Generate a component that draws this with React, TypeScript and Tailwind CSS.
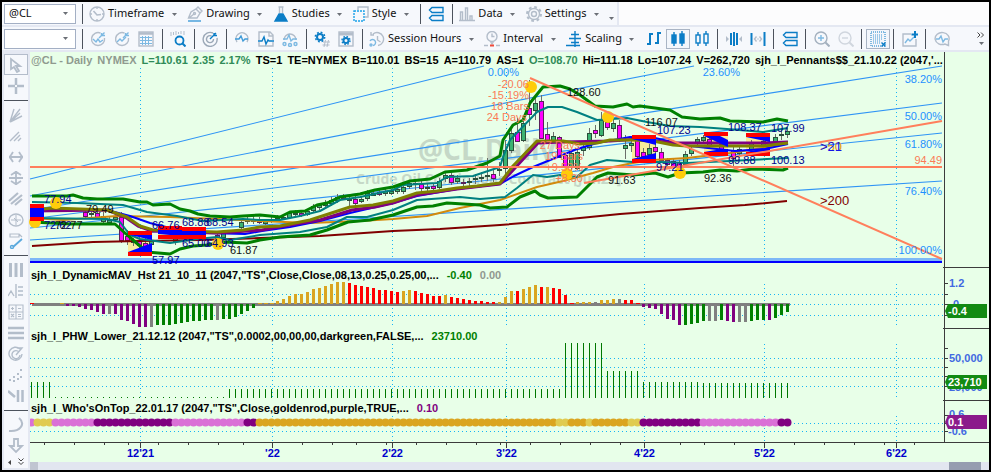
// src/App.tsx
import type { ReactNode } from 'react';
import { clsx } from 'clsx';

const GRID_X = [140.5, 272.5, 392.5, 506.5, 644.5, 764.5, 896.5];
const MONTHS = ["12'21", "'22", "2'22", "3'22", "4'22", "5'22", "6'22"];
const MINOR_TICKS = [
  44, 74, 104, 128, 158, 188, 218, 243, 302, 332, 356, 386, 416, 446, 476, 500, 530, 560, 590, 620,
  680, 704, 734, 794, 824, 854, 884, 914,
];

// every bar is 6 units wide, the first one sits at 31
const barX = (i: number) => 31 + i * 6;

/* ---------- icons ---------- */

const GREY = '#b3bdca';
const BLUE = '#0b7dc6';
const SKY = '#7db9e2';

function Icon({ children, size = 16 }: { children: ReactNode; size?: number }) {
  return (
    <svg width={size} height={size} viewBox="0 0 16 16" fill="none" stroke={GREY} strokeWidth="1.4" aria-hidden="true">
      {children}
    </svg>
  );
}

const Caret = () => (
  <svg width="5" height="3" viewBox="0 0 5 3" aria-hidden="true">
    <path d="M0 0h5L2.5 3z" fill="#6b6f76" />
  </svg>
);

const ClockIcon = () => (
  <Icon>
    <circle cx="8" cy="8" r="7" />
    <path d="M8 1v2M8 13v2M1 8h2M13 8h2" />
    <path d="M4.5 5 8 9l4-.5" strokeWidth="1.6" />
  </Icon>
);

const PenIcon = () => (
  <Icon>
    <path d="M1.5 12 4 6l5-3 4 4-3 5zM2 12l5-4M9 3l2-2 4 4-2 2" />
    <circle cx="7.5" cy="7.5" r="1" />
    <path d="M1 15h13" stroke="#3f9bd8" />
  </Icon>
);

const FlaskIcon = () => (
  <Icon>
    <path d="M5.5 1h5M6.5 1v6M9.5 1v6" />
    <path d="M6 8h4l4 7H2z" fill={BLUE} stroke={BLUE} />
  </Icon>
);

const StyleIcon = () => (
  <Icon>
    <path d="M5 4V1h10v10h-3" />
    <rect x="1" y="5" width="10" height="10" stroke="#1ba1e8" strokeDasharray="2 1" />
  </Icon>
);

const LayersIcon = () => (
  <Icon>
    <path d="M4 1.5h11v5H4L1.5 4zM4 9.5h11v5H4L1.5 12z" stroke={BLUE} />
  </Icon>
);

const DataIcon = () => (
  <Icon>
    <path d="M1.5 14V6h2v8M6.5 14V2h2v12M11 14v-4h2v4M0 14.5h16" />
  </Icon>
);

const GearIcon = () => (
  <Icon>
    <circle cx="8" cy="8" r="2.5" />
    <circle cx="8" cy="8" r="5.5" />
    <circle cx="8" cy="8" r="7" strokeDasharray="2.75 2.75" strokeWidth="2" />
  </Icon>
);

const TargetWaveIcon = ({ up }: { up?: boolean }) => (
  <Icon>
    <path d="M10.5 2A6.5 6.5 0 1 0 14.5 7" />
    <path d="m9 7 5.5-5.5M11.5 2v2.5H15" stroke={SKY} />
    <path d={up ? 'M3 11l3-3 2 2 4-4' : 'M3 8l3 3 2-3 2 3 3-2'} stroke={SKY} />
  </Icon>
);

const TableIcon = () => (
  <Icon>
    <rect x="1" y="1" width="14" height="14" />
    <path d="M1 2.5h14" strokeWidth="2.5" />
    <path d="M2 6.5h12M2 9.5h12M2 12.5h12M4.5 5v9M7.5 5v9M10.5 5v9" stroke={SKY} strokeWidth="1" />
  </Icon>
);

const SearchBarsIcon = () => (
  <Icon>
    <path d="M1 1v4M3.5 1v3M6 0v4M8.5 1v2M11 0v3M14 0v4" strokeWidth="1" />
    <circle cx="9.5" cy="9.5" r="4" stroke={BLUE} strokeWidth="1.8" />
    <path d="m12.5 12.5 3 3" stroke={BLUE} strokeWidth="2" />
  </Icon>
);

const TargetIcon = () => (
  <Icon>
    <path d="M11 2A7 7 0 1 0 15 7M9.5 5A3.5 3.5 0 1 0 11.5 8" stroke="#9ba8b7" />
    <path d="m8 8 6-6M12 2v2.5h3" stroke={BLUE} />
  </Icon>
);

const BubbleWaveIcon = () => (
  <Icon>
    <path d="M3 11a6 6 0 1 1 10 0" />
    <path d="M1 8h4l2-3 2 5 2-2h3" stroke="#3f9bd8" />
  </Icon>
);

const PageWaveIcon = () => (
  <Icon>
    <path d="M1 9V1h11l3 3v5M1 11v4h14v-4M11 1v4h4" />
    <path d="M0 10h4l2-4 2 7 2-4 1 1h5" stroke={BLUE} />
  </Icon>
);

const NetworkWaveIcon = () => (
  <Icon>
    <path d="M2 9a6 6 0 1 1 12 0" />
    <path d="M1 8h4l2-4 2 6 2-2h4" stroke={SKY} />
    <circle cx="2.5" cy="13" r="1.5" stroke={SKY} />
    <circle cx="8" cy="14" r="1.5" stroke={SKY} />
    <circle cx="13.5" cy="13" r="1.5" stroke={SKY} />
  </Icon>
);

const GearHashIcon = () => (
  <Icon>
    <circle cx="6" cy="6" r="3" stroke={BLUE} strokeWidth="2" />
    <circle cx="6" cy="6" r="4.7" stroke={BLUE} strokeWidth="1.5" strokeDasharray="1.85 1.85" />
    <path d="M11.500 9 10 16M14.500 9 13 16M9 11h7M8.500 14h7" strokeWidth="1" />
  </Icon>
);

const WindowGearIcon = () => (
  <Icon>
    <rect x="1" y="1" width="14" height="14" />
    <path d="M1 3h14" strokeWidth="3" />
    <circle cx="8" cy="9.5" r="2.5" stroke={BLUE} strokeWidth="2" />
    <circle cx="8" cy="9.5" r="4" stroke={BLUE} strokeDasharray="1.57 1.57" />
  </Icon>
);

const SessionIcon = () => (
  <Icon>
    <path d="M4 3a6.5 6.5 0 1 1 5 11.5M8.5 5v4l3 2M2 1v3h3" />
    <path d="M1 10a3 3 0 1 1 3 4.5" stroke={SKY} />
    <circle cx="2" cy="14" r="1" stroke={SKY} />
  </Icon>
);

const IntervalIcon = () => (
  <Icon>
    <circle cx="8" cy="5.5" r="5" />
    <path d="M8 2.5v3h2.5M6.5 10.500 8 13l1.500-2.500" />
    <path d="M0 14.5h4M12 14.5h4" />
    <path d="M6 14.5h4" stroke="#f04a3a" strokeWidth="2" />
  </Icon>
);

const ScalingIcon = () => (
  <Icon>
    <path d="M9 0v16M5 3.5h8M3 7.500h12M5 11.500h8M0 14.500h14" stroke={BLUE} />
  </Icon>
);

const OhlcIcon = () => (
  <Icon>
    <path d="M4 2v12M4 3h3M1 13h3M12 1v12M12 2h3M9 12h3" stroke={BLUE} strokeWidth="2" />
  </Icon>
);

const CandleIcon = ({ hollow }: { hollow?: boolean }) => (
  <Icon>
    <path d="M4 1v14M12 0v15" stroke={BLUE} />
    <rect x="2" y="4" width="4" height="8" stroke={BLUE} fill={hollow ? '#f6f8fc' : BLUE} />
    <rect x="10" y="3" width="4" height="9" stroke={BLUE} fill={hollow ? '#f6f8fc' : BLUE} />
  </Icon>
);

const NarrowIcon = () => (
  <Icon>
    <path d="M5 2v12M8 1v14M11 2v12" stroke={BLUE} strokeWidth="2" />
    <path d="M0 5v6l3-3zM16 5v6l-3-3z" fill={GREY} stroke="none" />
  </Icon>
);

const WidenIcon = () => (
  <Icon>
    <path d="M1.5 2v12M14.5 1v14" stroke={BLUE} strokeWidth="2" />
    <path d="M6.5 5.500 4.500 8l2 2.500M9.500 5.500l2 2.500-2 2.500M7.500 8h1" />
  </Icon>
);

const ZoomIcon = ({ plus }: { plus?: boolean }) => (
  <Icon>
    <circle cx="7" cy="7" r="6" stroke={plus ? '#a3b0be' : '#d0d6de'} />
    <path d="m11.500 11.500 4 4" stroke={plus ? '#a3b0be' : '#d0d6de'} strokeWidth="2" />
    <path d={plus ? 'M4 7h6M7 4v6' : 'M4 7h6'} stroke={plus ? SKY : '#d0d6de'} />
  </Icon>
);

const GridDotsIcon = () => (
  <Icon>
    <rect x="1" y="1" width="14" height="14" stroke={BLUE} strokeDasharray="1 1" strokeWidth="1" />
    <path d="M3 4h10M3 6h10M3 8h10M3 10h8M3 12h7" strokeDasharray="1 1" stroke={SKY} strokeWidth="1.500" />
    <path d="m11.500 11.500 4 4M15.500 11.500l-4 4" stroke={BLUE} />
  </Icon>
);

const ChartPlusIcon = () => (
  <Icon>
    <path d="M9 3H1v12h13V8" />
    <path d="m3 12 3-4 2 2 4-4" stroke={SKY} />
    <path d="M13 0v7M9.500 3.500h7" stroke={BLUE} strokeWidth="2" />
  </Icon>
);

const PulseBubbleIcon = () => (
  <Icon>
    <path d="M14.500 14.500 11 13A7 6 0 1 1 14.500 10z" />
    <path d="M2 8h3l2-3 2 6 2-3h3" stroke={SKY} />
  </Icon>
);

/* ---------- toolbar parts ---------- */

const Sep = () => (
  <span className="flex h-5 w-2 shrink-0 justify-center">
    <span className="w-px bg-[#4c525c]" />
  </span>
);

function IconButton({ label, boxed, children }: { label: string; boxed?: boolean; children: ReactNode }) {
  return (
    <button
      type="button"
      aria-label={label}
      className={clsx(
        'flex h-5 w-6 shrink-0 items-center justify-center',
        boxed && 'border border-[#a9b4c4] bg-[#f3f6fb]'
      )}
    >
      {children}
    </button>
  );
}

function MenuButton({ label, icon }: { label: string; icon: ReactNode }) {
  return (
    <button type="button" className="flex h-5 shrink-0 items-center whitespace-nowrap">
      <span className="flex w-[22px] justify-center">{icon}</span>
      {label}
      <span className="flex w-5 justify-center pt-0.5"><Caret /></span>
    </button>
  );
}

function Combo({ label, value }: { label: string; value: string }) {
  return (
    <span className="relative mx-0.5 flex h-5 w-[72px] shrink-0">
      <select
        aria-label={label}
        defaultValue={value}
        className="w-full appearance-none border border-[#a3afc4] bg-white pl-1 outline-none"
      >
        <option value={value}>{value}</option>
      </select>
      <span className="pointer-events-none absolute inset-y-0 right-2 flex items-center"><Caret /></span>
    </span>
  );
}

/* ---------- left drawing tools ---------- */

const TOOLS: { label: string; art: ReactNode }[][] = [
  [
    { label: 'Pointer', art: <path d="M3 2v10l3-2 3 5 2-1-3-5h4z" strokeWidth="1.800" /> },
    { label: 'Crosshair', art: <path d="M8 0v7M8 9v7M0 8h7M9 8h7" strokeWidth="2.500" /> },
  ],
  [
    { label: 'Gann fan', art: <path d="M2 15 12 2M2 15l4-13M2 15l12-6M2 15l10-9" /> },
    { label: 'Speed lines', art: <path d="m2 13 9-9M6 13l6-6M10 13l3-3" /> },
    { label: 'Horizontal extend', art: <path d="M1 8h14M5 3Q2 8 1 8q1 0 4 5M11 3q3 5 4 5-1 0-4 5" strokeWidth="1.800" /> },
    { label: 'Vertical extend', art: <path d="M8 1v14M3 5Q8 2 8 1q0 1 5 4M3 11q5 3 5 4 0-1 5-4M1 8h14" strokeWidth="1.800" /> },
    { label: 'Parallel lines', art: <path d="M1 10 10 2M3 13 14 4M7 14l7-6" strokeWidth="2.200" /> },
    { label: 'Time cycle', art: <><ellipse cx="8" cy="8" rx="7" ry="6" /><path d="M8 3v10M3 8h10M6 6l4 4" strokeWidth="1" /></> },
    {
      label: 'Trend line',
      art: <><path d="M2 1h9v3H2zM11 1l3 3" strokeWidth="1.200" /><path d="m5 14 9-8" stroke="#5aa9dd" strokeWidth="1.800" /><circle cx="4" cy="14" r="1.500" stroke="#5aa9dd" /></>,
    },
  ],
  [
    { label: 'Vertical lines', art: <path d="M2.500 1v14M8 1v14M13.500 1v14" strokeWidth="3" /> },
    { label: 'Retracement', art: <path d="m0 13 3-5 3 5M8 1v14M10 4h5M10 8h5M10 12h5" /> },
    { label: 'Calculator', art: <path d="M1 1h14v14H1zM8 1v14M1 8h14M3 4.500h3M4.500 3v3M10 4.500h3M3 10l3 3M6 10l-3 3M10 10.500h3M10 12.500h3" strokeWidth="1.100" /> },
    { label: 'Horizontal lines', art: <path d="M0 3h16M0 8h16M0 13h16" strokeWidth="2.500" /> },
    { label: 'Fibonacci arcs', art: <path d="M12 3a6.500 6.500 0 1 0 2 5M11 6a4 4 0 1 0 1 3M8 9l6-7h-5" /> },
    { label: 'Dots', art: <path d="M1 13h2M5 10h2M5 14h2M9 12h2M9 7h2M12 3h2M12 10h2" strokeWidth="2" /> },
    { label: 'Line and bars', art: <path d="m0 3 7 6M10 2v12M14.500 2v12" strokeWidth="2.500" /> },
  ],
  [
    { label: 'Arc', art: <path d="M11 1c7 6 1 14-10 13" strokeWidth="2" /> },
    { label: 'Arrow', art: <path d="M6 1h4v7h4l-6 6-6-6h4z" strokeWidth="1.800" /> },
  ],
];

function ToolRail() {
  return (
    <nav aria-label="Drawing tools" className="flex w-7 shrink-0 flex-col bg-[#e4e8f2] p-0.5">
      <div className="flex flex-1 flex-col bg-[#f6f8fc]">
        {TOOLS.map((group, g) => (
          <div key={g}>
            {g > 0 && (
              <div className="flex h-2 items-center"><span className="h-px w-full bg-[#4c525c]" /></div>
            )}
            {group.map((tool) => (
              <button
                key={tool.label}
                type="button"
                aria-label={tool.label}
                className={clsx(
                  'flex h-[21px] w-full items-center justify-center',
                  tool.label === 'Pointer' && 'border border-[#b4bdcb]'
                )}
              >
                <Icon>{tool.art}</Icon>
              </button>
            ))}
          </div>
        ))}
        <div className="flex h-3 items-center justify-around">
          <svg width="3" height="5" viewBox="0 0 3 5" aria-hidden="true"><path d="M3 0v5L0 2.500z" fill="#444" /></svg>
          <svg width="6" height="8" viewBox="0 0 6 8" fill="none" stroke="#444" aria-hidden="true"><path d="m.5.5 2.500 2.500L5.500.5M.5 4l2.500 2.500L5.500 4" /></svg>
        </div>
      </div>
    </nav>
  );
}

/* ---------- price pane ---------- */

const FAN = [
  [179, 484, 66], [196, 694, 66], [210, 942, 66], [219, 942, 103], [228, 942, 133], [240, 942, 181],
];

const CURVES = [
  { color: '#d28a0c', width: 2, d: '32,218 63,220 117,216 170,217 217,219 260,221 310,223 360,221 393,219 427,216 460,208 500,200 537,187 563,181 593,173 613,167 633,163 653,160 687,158 730,153 763,148 788,143' },
  { color: '#800000', width: 2, d: '32,246 93,242 140,241 200,240 260,238 320,236 393,231 440,229 500,225 560,220 620,214 700,208 745,205 787,201' },
  { color: '#0000ff', width: 2, d: '44,209 107,210 130,216 150,223 170,228 205,233 245,234 262,231 290,227 320,221 350,213 393,203 417,196 457,189 500,184 514,176 533,167 560,156 577,149 597,143 630,137 655,138 690,146 735,151 765,149 788,144' },
  { color: '#800080', width: 3, d: '32,211 107,210 125,217 138,226 152,231 217,233 262,230 290,225 320,220 352,210 375,207 393,203 417,195 457,189 500,184 515,168 538,143 563,142 610,141 640,139 655,141 675,143 763,143 788,142' },
  { color: '#808000', width: 3, d: '32,210 53,208 107,210 127,217 140,226 153,230 217,232 243,230 260,227 280,226 310,220 350,207 373,205 393,201 417,193 437,191 457,188 477,186 500,183 513,166 537,141 563,141 580,144 597,143 610,140 633,140 653,141 673,145 687,146 763,146 788,143' },
  { color: '#008080', width: 2, d: '32,202 77,203 123,205 147,212 162,214 177,216 203,221 243,219 260,220 280,220 300,216 320,211 340,200 360,197 393,190 403,185 437,183 447,177 473,176 500,167 503,157 510,140 537,112 548,107 562,107 577,112 597,120 627,118 647,122 670,126 700,127 727,129 763,132 788,128' },
  { color: '#008080', width: 2, d: '32,218 107,219 120,222 130,235 140,239 170,243 197,239 217,237 230,240 260,235 300,232 327,227 347,217 367,217 393,210 417,200 460,197 480,199 505,197 517,188 533,175 547,177 560,175 577,177 590,165 607,160 633,162 660,162 687,163 730,161 788,158' },
  { color: '#008000', width: 3, d: '32,196 67,196 73,195 83,198 97,199 123,199 140,202 147,202 153,205 170,204 180,209 190,211 198,214 210,216 230,217 243,216 260,215 280,217 290,212 305,211 317,205 327,203 340,197 360,194 375,190 393,187 410,181 430,179 445,172 467,170 487,163 500,156 503,140 513,125 523,120 530,103 543,87 560,86 570,89 580,95 595,106 613,107 627,104 633,107 640,106 670,110 682,117 700,119 720,118 730,121 763,122 777,119 788,121' },
  { color: '#008000', width: 3, d: '32,222 70,224 115,224 125,233 133,240 147,252 170,254 180,249 193,246 207,245 223,242 247,243 260,240 280,237 310,235 327,230 348,222 370,220 393,215 417,207 433,206 447,203 480,205 490,208 507,207 520,197 535,191 540,195 548,198 577,197 597,177 608,173 633,175 655,173 668,177 680,173 703,172 720,170 737,171 753,169 783,170 788,168' },
];

// [bar, high, low, body top, body bottom, rising]
type Candle = [number, number, number, number, number, boolean];

const CANDLES: Candle[] = [
  [9, 209, 218, 212, 216, false], [10, 210, 217, 213, 214, true], [11, 210, 219, 213, 217, false],
  [12, 212, 224, 216, 221, true], [13, 216, 224, 220, 222, true], [14, 214, 222, 217, 219, true],
  [15, 212, 243, 217, 240, false], [16, 230, 245, 236, 240, false], [17, 238, 246, 240, 242, true],
  [18, 237, 249, 241, 245, false], [19, 236, 251, 243, 248, false], [20, 236, 250, 240, 244, true],
  [24, 234, 245, 237, 241, true], [28, 230, 239, 233, 236, true], [31, 232, 241, 235, 238, false],
  [32, 231, 240, 233, 237, true], [35, 219, 230, 222, 227, true], [36, 217, 224, 220, 221, true],
  [37, 216, 224, 219, 221, true], [38, 217, 224, 220, 222, false], [39, 219, 225, 221, 223, true],
  [40, 217, 223, 219, 220, true], [41, 215, 222, 218, 220, true], [42, 214, 220, 217, 218, true],
  [43, 211, 219, 213, 217, true], [44, 210, 216, 213, 214, true], [45, 211, 217, 213, 215, false],
  [46, 209, 216, 211, 214, true], [47, 204, 212, 206, 210, true], [48, 203, 210, 205, 207, true],
  [49, 200, 208, 203, 205, true], [50, 197, 206, 200, 203, true], [51, 194, 203, 197, 200, true],
  [52, 194, 200, 196, 198, false], [53, 197, 208, 199, 200, true], [54, 196, 205, 199, 203, false],
  [55, 196, 203, 199, 201, true], [56, 190, 201, 193, 198, true], [57, 191, 196, 193, 195, true],
  [58, 190, 196, 192, 194, false], [59, 189, 196, 191, 193, true], [60, 189, 195, 191, 193, true],
  [61, 187, 194, 189, 191, true], [62, 184, 194, 187, 191, true], [63, 180, 189, 183, 186, true],
  [64, 180, 190, 183, 184, true], [65, 181, 192, 184, 188, false], [66, 184, 193, 187, 188, true],
  [67, 183, 192, 186, 188, false], [68, 178, 189, 181, 187, true], [69, 172, 182, 175, 178, true],
  [70, 172, 185, 175, 182, false], [71, 175, 184, 178, 181, true], [72, 179, 186, 182, 183, false],
  [73, 178, 186, 181, 182, true], [74, 174, 184, 178, 179, true], [75, 172, 182, 177, 178, true],
  [76, 158, 181, 175, 176, true], [77, 170, 182, 174, 178, false], [78, 162, 176, 169, 170, true],
  [79, 140, 178, 150, 168, true], [80, 128, 153, 133, 150, true], [81, 118, 142, 132, 141, false],
  [82, 115, 142, 123, 140, true], [83, 80, 126, 108, 114, false], [84, 97, 120, 103, 110, true],
  [85, 95, 139, 101, 138, false], [86, 122, 142, 134, 140, false], [87, 132, 142, 136, 140, true],
  [88, 136, 158, 137, 157, false], [89, 153, 168, 155, 167, false], [90, 150, 172, 153, 166, true],
  [91, 150, 170, 152, 168, true], [92, 142, 156, 147, 150, true], [93, 128, 150, 133, 147, true],
  [94, 125, 138, 130, 133, false], [95, 112, 137, 120, 135, true], [96, 118, 130, 122, 127, false],
  [97, 118, 132, 123, 128, true], [98, 120, 142, 125, 138, false], [99, 135, 159, 145, 148, true],
  [100, 138, 152, 143, 145, true], [101, 138, 158, 140, 156, false], [102, 148, 160, 152, 156, false],
  [103, 144, 157, 148, 154, true], [104, 143, 154, 147, 151, false], [105, 148, 162, 152, 160, false],
  [106, 158, 168, 160, 164, false], [107, 158, 169, 161, 166, false], [108, 160, 172, 162, 168, false],
  [109, 151, 166, 154, 164, true], [110, 146, 156, 149, 153, true], [111, 137, 145, 139, 143, true],
  [112, 135, 142, 137, 140, true], [113, 136, 148, 139, 146, false], [115, 140, 152, 144, 150, false],
  [117, 146, 166, 150, 158, false], [118, 146, 158, 149, 153, true], [120, 140, 152, 143, 149, true],
  [122, 139, 148, 141, 146, true], [124, 134, 144, 137, 142, true], [125, 130, 140, 134, 135, true],
  [126, 128, 138, 131, 134, true],
];

const PENNANTS = [
  { x: 30, w: 14, top: 204, bottom: 217, flags: ['30,208 44,208 44,216 30,220', '30,208 36,208 44,214 44,217 30,217'] },
  { x: 128, w: 24, top: 231, bottom: 252, flags: ['128,252 152,243 152,252', '130,235 152,235 152,240'] },
  { x: 158, w: 24, top: 226, bottom: 235, flags: ['158,230 182,230 182,236 158,234'] },
  { x: 182, w: 24, top: 227, bottom: 235, flags: ['182,230 206,230 206,236 182,235'] },
  { x: 632, w: 24, top: 135, bottom: 159, flags: ['632,139 656,139 656,145', '632,159 656,153 656,159'] },
  { x: 704, w: 24, top: 132, bottom: 152, flags: ['704,136 720,136 728,140 728,147', '704,152 722,149 728,149 728,152'] },
  { x: 746, w: 24, top: 133, bottom: 152, flags: ['746,137 770,137 770,142', '746,152 770,147 770,152'] },
];

const SWINGS = [[35, 222], [56, 203], [218, 244], [531, 87], [608, 117], [567, 174], [680, 173]];

const NAVY = '#00008b';
const INK = '#101010';
const PRICES: [string, number, number, string][] = [
  ['77.94', 44, 203, NAVY], ['72.62', 44, 229, NAVY], ['72.77', 55, 229, INK], ['79.49', 86, 213, INK],
  ['57.97', 152, 264, NAVY], ['66.76', 152, 229, NAVY], ['68.88', 182, 226, NAVY], ['68.54', 206, 226, NAVY],
  ['65.00', 182, 247, NAVY], ['64.93', 206, 247, NAVY], ['61.87', 230, 254, INK], ['128.60', 567, 96, INK],
  ['116.07', 645, 126, INK], ['107.23', 657, 134, NAVY], ['108.37', 728, 131, NAVY], ['107.99', 771, 132, NAVY],
  ['97.21', 656, 171, NAVY], ['92.36', 704, 182, INK], ['99.88', 728, 164, NAVY], ['100.13', 771, 164, NAVY],
  ['91.63', 608, 184, INK],
];

const FIB_LABELS: [string, number, number][] = [
  ['0.00%', 519, 76], ['23.60%', 740, 76], ['38.20%', 942, 83], ['50.00%', 942, 120],
  ['61.80%', 942, 148], ['76.40%', 942, 195], ['100.00%', 942, 254],
];

const CORAL_LABELS: [string, number, number][] = [
  ['-20.06', 529, 88], ['-15.19%', 529, 99], ['18 Bars', 529, 110], ['24 Days', 527, 121],
  ['27 Days', 580, 149], ['19 Bars', 583, 160], ['+9.50%', 583, 171], ['+8.30', 583, 182],
  ['94.49', 942, 164],
];

function GridLines({ top, bottom, rows = [] }: { top: number; bottom: number; rows?: number[] }) {
  return (
    <g stroke="#16b4f5" strokeDasharray="1 3" shapeRendering="crispEdges">
      {GRID_X.map((x) => <path key={x} d={`M${x} ${top}V${bottom}`} />)}
      {rows.map((y) => <path key={y} d={`M30 ${y + 0.5}H944`} />)}
    </g>
  );
}

function PriceChart() {
  return (
    <svg viewBox="30 68 914 199" className="block h-auto w-full overflow-visible text-[11px]" role="img" aria-label="Crude oil daily price chart">
      <g fill="#c5d8c7" className="font-['Open_Sans',sans-serif] font-bold">
        <text x="418" y="160" className="text-[28px]">@CL,Daily</text>
        <text x="356" y="184" className="text-sm">Crude Oil Continuous Contract [Jun22]</text>
      </g>
      <GridLines top={68} bottom={262} />
      {FAN.map(([y1, x2, y2]) => (
        <path key={y1} d={`M30 ${y1}L${x2} ${y2}`} stroke="#2f94f5" strokeWidth="1.2" />
      ))}
      {PENNANTS.map((p) => (
        <rect key={p.x} x={p.x} y={p.top} width={p.w} height={p.bottom - p.top} fill="#f8ec9a" />
      ))}
      {CANDLES.map(([i, high, low, top, bottom, rising]) => (
        <g key={i} shapeRendering="crispEdges">
          <path d={`M${barX(i) + 0.5} ${high}V${low}`} stroke="#6a6f6a" />
          <rect
            x={barX(i) - 1.5}
            y={top + 0.5}
            width="4"
            height={bottom - top}
            stroke={rising ? '#2a4f3a' : '#5a205a'}
            fill={rising ? '#3cb371' : '#ff00ff'}
          />
        </g>
      ))}
      {CURVES.map((c, i) => (
        <polyline key={i} points={c.d} fill="none" stroke={c.color} strokeWidth={c.width} strokeLinejoin="round" />
      ))}
      {SWINGS.map(([cx, cy]) => <circle key={cx} cx={cx} cy={cy} r="6" fill="#ffcc0a" />)}
      {PENNANTS.map((p) => (
        <g key={p.x}>
          {p.flags.map((f) => <polygon key={f} points={f} fill="#0000ff" />)}
          <rect x={p.x} y={p.top} width={p.w} height="4" fill="#ff0000" />
          <rect x={p.x} y={p.bottom} width={p.w} height="4" fill="#ff0000" />
        </g>
      ))}
      <rect x="30" y="258" width="912" height="3" fill="#7db8f7" />
      <rect x="30" y="261" width="912" height="2" fill="#0000ff" />
      <g stroke="#ff7f5c" strokeWidth="2">
        <path d="M30 167H942" />
        <path d="M530 78 942 259M584 183 942 121" />
      </g>
      {PRICES.map(([text, x, y, fill]) => <text key={`${text}${x}`} x={x} y={y} fill={fill}>{text}</text>)}
      {FIB_LABELS.map(([text, x, y]) => <text key={text} x={x} y={y} textAnchor="end" fill="#1e90ff">{text}</text>)}
      {CORAL_LABELS.map(([text, x, y]) => <text key={text} x={x} y={y} textAnchor="end" fill="#fa7b55">{text}</text>)}
      <g className="text-[13px]">
        <text x="820" y="151" fill="#e0980c">&gt;50</text>
        <text x="820" y="151" fill="#1414e6">&gt;21</text>
        <text x="820" y="205" fill="#800000">&gt;200</text>
      </g>
    </svg>
  );
}

/* ---------- indicator panes ---------- */

const GOLD = '#daa520';
const RED = '#ff0000';
const GREEN = '#008000';
const PURPLE = '#800080';
const GRAY = '#808080';

// runs of same-coloured bars: [first bar, colour, heights]
const MOMENTUM: [number, string, number[]][] = [
  [0, RED, [1]], [5, GOLD, [1]],
  [6, PURPLE, [-2, -2, -3, -5, -6, -8, -10]], [13, GRAY, [-10]], [14, PURPLE, [-10, -16, -17, -20, -23, -23]],
  [20, GRAY, [-23]], [21, GREEN, [-21, -21, -21, -20, -19, -18, -17, -17, -16, -16]], [31, GRAY, [-16]],
  [32, GREEN, [-15, -15, -13, -10, -7, -4]],
  [38, GOLD, [1, 1, 1, 3, 5, 8, 10, 10, 12, 15, 16, 18, 20, 22, 22]],
  [53, RED, [21, 19, 18, 17, 16, 14, 14, 13, 12]], [62, GOLD, [13, 14]], [64, RED, [13, 11, 10, 8, 8]],
  [69, GOLD, [9]], [70, RED, [7, 6, 5, 4, 3, 3, 2, 2]], [78, GOLD, [2, 7, 13]], [81, RED, [13]],
  [82, GOLD, [15, 17, 19]], [85, RED, [17]], [86, GOLD, [17]], [87, RED, [16, 15, 9, 1]],
  [91, GOLD, [2, 2, 2]], [94, GRAY, [2]], [95, GOLD, [4, 4, 5]], [98, GRAY, [5]], [99, RED, [4, 4, 1]],
  [102, PURPLE, [-3, -4, -5, -10, -15, -16, -21]], [109, GREEN, [-21, -20, -19, -17]],
  [113, GRAY, [-17, -17]], [115, GREEN, [-16]], [116, PURPLE, [-17, -18]], [118, GRAY, [-18, -18]],
  [120, GREEN, [-17, -16, -16]], [123, PURPLE, [-16]], [124, GREEN, [-14, -11, -8]],
];

// [first bar, last bar, top]
const VOLUME_RUNS = [
  [0, 3, 382], [4, 32, 397], [33, 88, 389], [89, 95, 343], [96, 101, 371], [102, 111, 382], [112, 126, 383],
];

const ORCHID = '#da70d6';
const KHAKI = '#e0cb50';
const TREND_RUNS: [number, number, string][] = [
  [0, 0, ORCHID], [1, 3, KHAKI], [4, 10, ORCHID], [11, 23, PURPLE], [24, 35, ORCHID], [36, 37, PURPLE],
  [38, 87, GOLD], [88, 89, KHAKI], [90, 92, GOLD], [93, 93, KHAKI], [94, 99, GOLD], [100, 101, KHAKI],
  [102, 111, PURPLE], [112, 124, ORCHID], [125, 126, PURPLE],
];

const range = (from: number, to: number) => Array.from({ length: to - from + 1 }, (_, k) => from + k);

function MomentumChart() {
  return (
    <svg viewBox="30 283 914 45" className="block h-auto w-full overflow-visible" role="img" aria-label="Dynamic MAV histogram">
      <GridLines top={284} bottom={325} rows={[294, 304, 315]} />
      <rect x="32" y="303" width="758" height="3" fill={GRAY} />
      {MOMENTUM.flatMap(([start, color, heights]) =>
        heights.map((h, k) => (
          <rect
            key={start + k}
            x={barX(start + k) - 1}
            y={h > 0 ? 304 - h : 304}
            width={h === 1 ? 4 : 3}
            height={Math.abs(h)}
            fill={color}
          />
        ))
      )}
    </svg>
  );
}

function VolumeChart() {
  return (
    <svg viewBox="30 344 914 56" className="block h-auto w-full overflow-visible" role="img" aria-label="PHW lower bars">
      <GridLines top={344} bottom={398} rows={[358, 367, 376, 386]} />
      {VOLUME_RUNS.flatMap(([from, to, top]) =>
        range(from, to).map((i) => <rect key={i} x={barX(i)} y={top} width="1" height={398 - top} fill="#007800" />)
      )}
    </svg>
  );
}

function TrendChart() {
  return (
    <svg viewBox="30 416 914 26" className="block h-auto w-full" role="img" aria-label="Who's on top dots">
      <GridLines top={416} bottom={442} rows={[423, 431]} />
      {TREND_RUNS.flatMap(([from, to, color]) =>
        range(from, to).map((i) => <circle key={i} cx={barX(i) + 0.5} cy="422.5" r="4" fill={color} />)
      )}
    </svg>
  );
}

function Pane({ title, chart, axisTop, axisHeight, ticks = [], axis }: {
  title: ReactNode;
  chart: ReactNode;
  axisTop: number;
  axisHeight: number;
  ticks?: number[];
  axis?: ReactNode;
}) {
  return (
    <section className="flex">
      <div className="min-w-0 flex-1">
        <h2 className="flex h-4 items-center whitespace-pre px-px text-[11px] font-bold">{title}</h2>
        {chart}
      </div>
      <div className="w-[45px] shrink-0 border-l border-[#3c3c3c]">
        <svg
          viewBox={`945 ${axisTop} 44 ${axisHeight}`}
          className="block h-full w-full overflow-visible text-[11px] font-bold"
          fill="#4169e1"
        >
          {ticks.map((y) => <path key={y} d={`M945 ${y + 0.5}h3`} stroke="#3c3c3c" />)}
          {axis}
          <path d={`M943 ${axisTop + axisHeight + 0.5}H989`} stroke="#3c3c3c" />
        </svg>
      </div>
    </section>
  );
}

function Tag({ y, color, text }: { y: number; color: string; text: string }) {
  return (
    <g>
      <path d={`M945 ${y + 7}L948 ${y}H987V${y + 14}H948z`} fill={color} />
      <text x="948" y={y + 11} fill="#fff">{text}</text>
    </g>
  );
}

function TimeAxis() {
  return (
    <svg viewBox="30 442 959 20" className="block h-auto w-full text-[11px] font-bold" role="img" aria-label="Dates">
      <path d="M30 442.500H989" stroke="#3c3c3c" />
      {MINOR_TICKS.map((x) => <path key={x} d={`M${x + 0.5} 443v2`} stroke="#3c3c3c" />)}
      {GRID_X.map((x, i) => (
        <g key={x}>
          <path d={`M${x} 443v5`} stroke="#3c3c3c" />
          <text x={x} y="457" textAnchor="middle" fill="#0000cd">{MONTHS[i]}</text>
        </g>
      ))}
    </svg>
  );
}

const QUOTE = [
  ['@CL - Daily', 'text-[#8f9a8f]'], ['NYMEX', 'text-[#8f9a8f]'], ['L=110.61', 'text-[#2e8b57]'],
  ['2.35', 'text-[#2e8b57]'], ['2.17%', 'text-[#2e8b57]'], ['TS=1', 'text-black'], ['TE=NYMEX', 'text-black'],
  ['B=110.01', 'text-black'], ['BS=15', 'text-black'], ['A=110.79', 'text-black'], ['AS=1', 'text-black'],
  ['O=108.70', 'text-[#2e8b57]'], ['Hi=111.18', 'text-black'], ['Lo=107.24', 'text-black'],
  ['V=262,720', 'text-black'], ["sjh_I_Pennants$$_21.10.22 (2047,'...", 'text-black'],
];

export default function App() {
  return (
    <div className="flex flex-col overflow-hidden bg-black p-0.5 font-['Liberation_Sans',Arial,sans-serif]">
      <header className="bg-[#fcfcfd] font-['Noto_Sans',sans-serif] text-[11px] text-[#111]">
        <div className="flex h-[25px] items-center overflow-hidden border-b-2 border-[#e4e8f2]">
          <div className="flex h-full items-center border-r-2 border-[#e4e8f2] bg-[#f6f8fc]">
            <Combo label="Symbol" value="@CL" />
            <Sep />
            <MenuButton label="Timeframe" icon={<ClockIcon />} />
            <MenuButton label="Drawing" icon={<PenIcon />} />
            <MenuButton label="Studies" icon={<FlaskIcon />} />
            <MenuButton label="Style" icon={<StyleIcon />} />
            <Sep />
            <IconButton label="Layers"><LayersIcon /></IconButton>
            <Sep />
            <MenuButton label="Data" icon={<DataIcon />} />
            <MenuButton label="Settings" icon={<GearIcon />} />
            <button type="button" aria-label="Toolbar options" className="flex h-5 w-2.5 items-end justify-center pb-1">
              <Caret />
            </button>
          </div>
        </div>
        <div className="flex h-[25px] items-center overflow-hidden border-b-2 border-[#e4e8f2] bg-[#f6f8fc]">
          <Combo label="Command" value="" />
          <Sep />
          <IconButton label="Strategy"><TargetWaveIcon /></IconButton>
          <IconButton label="Optimize"><TargetWaveIcon up /></IconButton>
          <IconButton label="Report"><TableIcon /></IconButton>
          <Sep />
          <IconButton label="Find bars"><SearchBarsIcon /></IconButton>
          <Sep />
          <IconButton label="Target"><TargetIcon /></IconButton>
          <Sep />
          <IconButton label="Insert analysis"><BubbleWaveIcon /></IconButton>
          <IconButton label="Save template"><PageWaveIcon /></IconButton>
          <IconButton label="Group analysis"><NetworkWaveIcon /></IconButton>
          <Sep />
          <IconButton label="Customize inputs"><GearHashIcon /></IconButton>
          <IconButton label="Window settings"><WindowGearIcon /></IconButton>
          <Sep />
          <MenuButton label="Session Hours" icon={<SessionIcon />} />
          <MenuButton label="Interval" icon={<IntervalIcon />} />
          <MenuButton label="Scaling" icon={<ScalingIcon />} />
          <IconButton label="OHLC bars"><OhlcIcon /></IconButton>
          <IconButton label="Candles" boxed><CandleIcon /></IconButton>
          <IconButton label="Hollow candles"><CandleIcon hollow /></IconButton>
          <Sep />
          <IconButton label="Decrease spacing"><NarrowIcon /></IconButton>
          <IconButton label="Increase spacing"><WidenIcon /></IconButton>
          <Sep />
          <IconButton label="Arrange"><LayersIcon /></IconButton>
          <Sep />
          <IconButton label="Zoom in"><ZoomIcon plus /></IconButton>
          <IconButton label="Zoom out"><ZoomIcon /></IconButton>
          <Sep />
          <IconButton label="Grid" boxed><GridDotsIcon /></IconButton>
          <Sep />
          <IconButton label="Add chart"><ChartPlusIcon /></IconButton>
          <Sep />
          <IconButton label="Activity"><PulseBubbleIcon /></IconButton>
          <button type="button" aria-label="More" className="mr-1 ml-auto flex w-2 flex-col items-center gap-1">
            <svg width="8" height="6" viewBox="0 0 8 6" fill="none" stroke="#444" aria-hidden="true">
              <path d="m.5.5 2.500 2.500-2.500 2.500M4 .5 6.500 3 4 5.500" />
            </svg>
            <Caret />
          </button>
        </div>
      </header>

      <div className="flex">
        <ToolRail />
        <main className="flex min-w-0 flex-1 flex-col bg-[#e8ffe8]">
          <Pane
            title={
              <span className="flex w-full justify-between">
                {QUOTE.map(([text, color]) => <span key={text} className={color}>{text}</span>)}
              </span>
            }
            chart={<PriceChart />}
            axisTop={52}
            axisHeight={215}
          />
          <Pane
            title={
              <span className="flex gap-2">
                <span>sjh_I_DynamicMAV_Hst 21_10_11 (2047,"TS",Close,Close,08,13,0.25,0.25,00,...</span>
                <span className="text-[#008000]">-0.40</span>
                <span className="text-[#909890]">0.00</span>
              </span>
            }
            chart={<MomentumChart />}
            axisTop={267}
            axisHeight={61}
            ticks={[283, 294, 304, 315]}
            axis={
              <>
                <text x="949" y="287">1.2</text>
                <text x="953" y="308">0</text>
                <Tag y={304} color="#128a12" text="-0.4" />
              </>
            }
          />
          <Pane
            title={
              <span className="flex gap-2">
                <span>sjh_I_PHW_Lower_21.12.12 (2047,"TS",0.0002,00,00,00,darkgreen,FALSE,...</span>
                <span className="text-[#008000]">23710.00</span>
              </span>
            }
            chart={<VolumeChart />}
            axisTop={328}
            axisHeight={72}
            ticks={[348, 358, 367, 376, 386]}
            axis={
              <>
                <text x="949" y="362">50,000</text>
                <text x="949" y="391">25,000</text>
                <Tag y={375} color="#128a12" text="23,710" />
              </>
            }
          />
          <Pane
            title={
              <span className="flex gap-2">
                <span>sjh_I_Who'sOnTop_22.01.17 (2047,"TS",Close,goldenrod,purple,TRUE,...</span>
                <span className="text-[#800080]">0.10</span>
              </span>
            }
            chart={<TrendChart />}
            axisTop={400}
            axisHeight={42}
            ticks={[415, 423, 431]}
            axis={
              <>
                <text x="949" y="418">0.6</text>
                <text x="948" y="435">-0.6</text>
                <Tag y={415} color="#8b1a8b" text="0.1" />
              </>
            }
          />
          <TimeAxis />
          <div className="flex h-2 justify-between bg-[#e2e6f0] pr-2">
            <span className="w-2 bg-[#c0c5d1]" />
            <span className="w-8 bg-[#969db0]" />
          </div>
        </main>
      </div>
    </div>
  );
}
